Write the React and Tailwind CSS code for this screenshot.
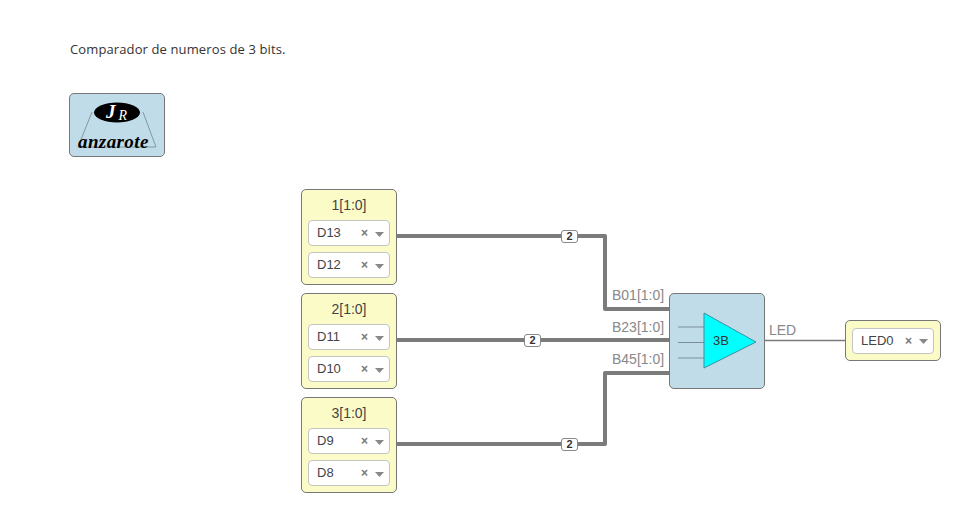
const PinSelect = ({ label }) => (
  <div className="flex h-[26px] items-center rounded-[4px] border border-[#c4c4c4] bg-white pl-[8px] pr-[5px] text-[13px] text-[#444]">
    <span className="flex-1">{label}</span>
    <span className="mr-[7px] text-[12px] font-bold leading-none text-[#777]">×</span>
    <svg width="9" height="5" viewBox="0 0 9 5" className="mt-[2px]">
      <path d="M0 0 L9 0 L4.500 5 Z" fill="#888" />
    </svg>
  </div>
);

const PinGroup = ({ title, pins, className }) => (
  <div className={`absolute flex w-[96px] flex-col gap-[6px] rounded-[5px] border border-[#777] bg-[#fbfbc8] px-[6px] pb-[6px] ${title ? 'h-[96px] pt-[7px]' : 'h-[41px] justify-center pt-[6px]'} ${className}`}>
    {title && <div className="h-[17px] text-center text-[14px] leading-[17px] text-[#444]">{title}</div>}
    {pins.map((pin) => (
      <PinSelect key={pin} label={pin} />
    ))}
  </div>
);

const BusBadge = ({ className }) => (
  <div className={`absolute flex h-[13px] w-[17px] items-center justify-center rounded-[3px] border border-[#888] bg-white text-[11px] font-bold leading-none text-[#333] ${className}`}>
    2
  </div>
);

const WireLabel = ({ text, className }) => (
  <div className={`absolute text-[14px] leading-[16px] text-[#888] ${className}`}>{text}</div>
);

const Logo = () => (
  <div className="relative ml-[69px] mt-[35px] h-[64px] w-[96px] overflow-hidden rounded-[5px] border border-[#777] bg-[#c0dce8]">
    <svg width="94" height="62" viewBox="0 0 94 62" className="absolute left-0 top-0">
      <path d="M22 18 L8 53 L86 53 L73 18" fill="none" stroke="#6f8792" strokeWidth="0.8" />
      <ellipse cx="47" cy="18.500" rx="23" ry="10" fill="#000" />
    </svg>
    <div className="absolute left-[36px] top-[9px] font-['Liberation_Serif',serif] text-[19px] font-bold italic leading-[18px] text-white">
      J<span className="relative top-[2px] ml-[3px] text-[14px] font-normal">R</span>
    </div>
    <div className="absolute left-[8px] top-[38px] font-['Liberation_Serif',serif] text-[19px] font-bold italic leading-[20px] tracking-[0.4px] text-black">
      anzarote
    </div>
  </div>
);

export default function App() {
  return (
    <div className="h-[530px] w-[974px] overflow-hidden bg-white pt-[40px] font-['Liberation_Sans',sans-serif]">
      <p className="ml-[70px] font-['Open_Sans',sans-serif] text-[13px] leading-[18px] tracking-[0.12px] text-[#333]">
        Comparador de numeros de 3 bits.
      </p>
      <Logo />

      {/* diagram canvas */}
      <div className="relative h-[373px] w-[974px]">
        <svg width="974" height="373" viewBox="0 0 974 373" className="absolute left-0 top-0" fill="none">
          <g transform="translate(0 -157)" stroke="#7b7b7b" strokeWidth="4" strokeLinejoin="round">
            <path d="M397 236 H605 V309 H669" />
            <path d="M397 340 H669" />
            <path d="M397 444 H605 V373 H669" />
            <path d="M765 340.500 H845" strokeWidth="1.500" />
          </g>
        </svg>

        <PinGroup title="1[1:0]" pins={['D13', 'D12']} className="left-[301px] top-[32px]" />
        <PinGroup title="2[1:0]" pins={['D11', 'D10']} className="left-[301px] top-[136px]" />
        <PinGroup title="3[1:0]" pins={['D9', 'D8']} className="left-[301px] top-[240px]" />
        <PinGroup pins={['LED0']} className="left-[845px] top-[163px]" />

        <BusBadge className="left-[561px] top-[73px]" />
        <BusBadge className="left-[524px] top-[177px]" />
        <BusBadge className="left-[561px] top-[281px]" />

        <WireLabel text="B01[1:0]" className="left-[612px] top-[130px]" />
        <WireLabel text="B23[1:0]" className="left-[612px] top-[162px]" />
        <WireLabel text="B45[1:0]" className="left-[612px] top-[194px]" />
        <WireLabel text="LED" className="left-[769px] top-[165px]" />

        <div className="absolute left-[669px] top-[136px] h-[96px] w-[96px] rounded-[5px] border border-[#777] bg-[#c0dce8]">
          <svg width="94" height="94" viewBox="0 0 94 94" className="absolute left-0 top-0">
            <path d="M8 33 H34 M8 48.500 H34 M8 64 H34" stroke="#7a8f99" strokeWidth="1" />
            <path d="M34 19 L86 48 L34 74 Z" fill="#00ffff" stroke="#3f8f9f" strokeWidth="1" />
          </svg>
          <div className="absolute left-[43px] top-[39px] text-[13px] leading-[16px] text-[#333]">3B</div>
        </div>
      </div>
    </div>
  );
}
